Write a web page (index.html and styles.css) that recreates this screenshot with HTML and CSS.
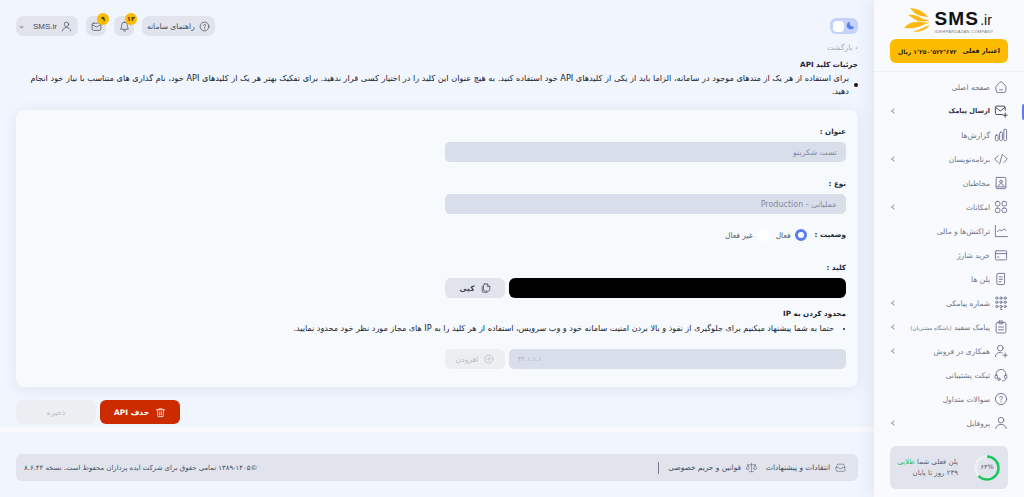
FILE: index.html
```html
<!DOCTYPE html>
<html lang="fa" dir="rtl">
<head>
<meta charset="utf-8">
<title>SMS.ir</title>
<link rel="stylesheet" href="styles.css">
</head>
<body>
<div class="app">
  <aside class="sidebar">
    <div class="logo" dir="ltr">
      <svg class="logo-mark" viewBox="0 0 27 24" width="27" height="24"><path d="M6 0c5 .5 13 2 18 9-5-.5-9-1-12-3C9 4 8 2 6 0z" fill="#fdb913"/><path d="M4 7c5-1 10 1 13 3 3 1.500 5 2 9 2-5 2-10 2-14 0-3-1.500-6-4-8-5z" fill="#fdb913"/><path d="M0 20c4-5 10-7 16-6 4 .5 7 .5 10 .5-5 1.500-8 3-12 4.500-5 1.500-10 1.500-14 1z" fill="#fdb913"/><path d="M9 23.500c6-1 11-5 17-6.500-3 4-10 8-17 6.500z" fill="#fdb913"/></svg>
      <div class="logo-text">
        <div class="logo-name">SMS<span class="logo-ir">.ir</span></div>
        <div class="logo-sub">IDEHPARDAZAN COMPANY</div>
      </div>
    </div>
    <div class="balance"><span class="bal-label">اعتبار فعلی</span><span class="bal-num">۱٬۲۵۰٬۵۲۲٬۶۷۲ ریال</span></div>
    <nav class="menu">
      <a class="item"><svg class="ico" viewBox="0 0 20 20"><path d="M3 9l5-5.500a3 3 0 0 1 4 0L17 9v6a3 3 0 0 1-3 3H6a3 3 0 0 1-3-3z"/><path d="M8 14h4"/></svg><span>صفحه اصلی</span></a>
      <a class="item active"><svg class="ico dark" viewBox="0 0 20 20"><path d="M16 9V5a2 2 0 0 0-2-2H4a2 2 0 0 0-2 2v8a2 2 0 0 0 2 2h8"/><path d="M2.500 5L9 10l6.500-5M16 13v6M13 16h6"/></svg><span>ارسال پیامک</span><i class="chev"></i></a>
      <a class="item"><svg class="ico" viewBox="0 0 20 20"><rect x="2" y="10" width="4" height="8" rx="1.500"/><rect x="8" y="6" width="4" height="12" rx="1.500"/><rect x="14" y="2" width="4" height="16" rx="1.500"/></svg><span>گزارش‌ها</span></a>
      <a class="item"><svg class="ico" viewBox="0 0 20 20"><path d="M6 5l-5 5 5 5M14 5l5 5-5 5M12 3L8 17"/></svg><span>برنامه‌نویسان</span><i class="chev"></i></a>
      <a class="item"><svg class="ico" viewBox="0 0 20 20"><rect x="3" y="2" width="14" height="16" rx="1.500"/><circle cx="10" cy="8" r="2"/><path d="M6.500 14c.5-2 2-3 3.500-3s3 1 3.500 3M3 15.500h14"/></svg><span>مخاطبان</span></a>
      <a class="item"><svg class="ico" viewBox="0 0 20 20"><rect x="2" y="2" width="6.500" height="6.500" rx="2.500"/><rect x="11.500" y="2" width="6.500" height="6.500" rx="2.500"/><rect x="2" y="11.500" width="6.500" height="6.500" rx="2.500"/><rect x="11.500" y="11.500" width="6.500" height="6.500" rx="2.500"/></svg><span>امکانات</span><i class="chev"></i></a>
      <a class="item"><svg class="ico" viewBox="0 0 20 20"><path d="M2 2v16h17M5 11l3-3 3 2 3-3 3 2"/></svg><span>تراکنش‌ها و مالی</span></a>
      <a class="item"><svg class="ico" viewBox="0 0 20 20"><rect x="2" y="4" width="16" height="13" rx="1.500"/><path d="M2 8h16M5 13h2"/></svg><span>خرید شارژ</span></a>
      <a class="item"><svg class="ico" viewBox="0 0 20 20"><path d="M4 4a2 2 0 0 1 2-2h9v14a2 2 0 0 1-2 2H6a2 2 0 0 1-2-2z"/><path d="M7.500 7h4.500M7.500 10.500h4.500M7.500 14h2.500"/></svg><span>پلن ها</span></a>
      <a class="item"><svg class="ico" viewBox="0 0 20 20"><circle cx="4" cy="3" r="1.600"/><circle cx="10" cy="3" r="1.600"/><circle cx="16" cy="3" r="1.600"/><circle cx="4" cy="9" r="1.600"/><circle cx="10" cy="9" r="1.600"/><circle cx="16" cy="9" r="1.600"/><circle cx="4" cy="15" r="1.600"/><circle cx="10" cy="15" r="1.600"/><circle cx="16" cy="15" r="1.600"/><circle cx="10" cy="19" r=".8"/></svg><span>شماره پیامکی</span><i class="chev"></i></a>
      <a class="item"><svg class="ico" viewBox="0 0 20 20"><rect x="3" y="3.500" width="14" height="15" rx="2"/><rect x="7" y="1.500" width="6" height="4" rx="1"/><path d="M6.500 10h7M6.500 14h7"/></svg><span>پیامک سفید <small>(باشگاه مشتریان)</small></span><i class="chev"></i></a>
      <a class="item"><svg class="ico" viewBox="0 0 20 20"><circle cx="9" cy="6" r="4"/><path d="M2 18c.5-4 3.500-6 7-6 1 0 2 .2 2.800.5M16 13v6M13 16h6"/></svg><span>همکاری در فروش</span><i class="chev"></i></a>
      <a class="item"><svg class="ico" viewBox="0 0 20 20"><path d="M3 11V9a7 7 0 0 1 14 0v2"/><rect x="1.500" y="10" width="3.500" height="5" rx="1.700"/><rect x="15" y="10" width="3.500" height="5" rx="1.700"/><path d="M17 15c0 2-2 3.500-5 3.500"/><circle cx="7" cy="16" r="1.800"/></svg><span>تیکت پشتیبانی</span></a>
      <a class="item"><svg class="ico" viewBox="0 0 20 20"><circle cx="10" cy="10" r="8"/><path d="M8 8a2 2 0 1 1 3 1.800c-.8.4-1 .9-1 1.700M10 14v.4"/></svg><span>سوالات متداول</span></a>
      <a class="item"><svg class="ico" viewBox="0 0 20 20"><circle cx="10" cy="6" r="4"/><path d="M2.500 18c.5-4 3.500-6 7.500-6s7 2 7.500 6"/></svg><span>پروفایل</span><i class="chev"></i></a>
    </nav>
    <div class="plan">
      <div class="ring">
        <svg viewBox="0 0 26 26" width="26" height="26"><circle cx="13" cy="13" r="11.500" class="ring-bg"/><circle cx="13" cy="13" r="11.500" class="ring-fg" pathLength="100" stroke-dasharray="63 100" transform="rotate(-90 13 13)"/></svg>
        <span class="ring-num">۶۳%</span>
      </div>
      <div class="plan-text">
        <div>پلن فعلی شما <b>طلایی</b></div>
        <div>۲۳۹ روز تا پایان</div>
      </div>
    </div>
    <span class="rail"></span>
  </aside>

  <main class="main">
    <header class="topbar">
      <div class="toggle"><svg class="moon" viewBox="0 0 12 12" width="10" height="10"><path d="M6 1a4.500 4.500 0 1 0 5 5.500A4 4 0 0 1 6 1z"/></svg><span class="knob"></span></div>
      <div class="tools">
        <a class="pill"><svg class="tool-ico" viewBox="0 0 20 20"><circle cx="10" cy="10" r="8"/><path d="M8 8a2 2 0 1 1 3 1.800c-.8.4-1 .9-1 1.700M10 14v.4"/></svg><span>راهنمای سامانه</span></a>
        <a class="pill square"><svg class="tool-ico" viewBox="0 0 20 20"><path d="M10 2a5 5 0 0 0-5 5c0 5-2 7-2 8h14c0-1-2-3-2-8a5 5 0 0 0-5-5zM8 18h4"/></svg><em class="badge">۱۳</em></a>
        <a class="pill square"><svg class="tool-ico" viewBox="0 0 20 20"><rect x="2" y="4" width="16" height="13" rx="2.500"/><path d="M2.500 7L10 11l7.500-4"/></svg><em class="badge">۹</em></a>
        <a class="pill user"><svg class="tool-ico" viewBox="0 0 20 20"><circle cx="10" cy="6" r="4"/><path d="M2.500 18c.5-4 3.500-6 7.500-6s7 2 7.500 6"/></svg><span>SMS.ir</span><i class="caret"></i></a>
      </div>
    </header>

    <a class="back">‹ بازگشت</a>
    <h1 class="title">جزئیات کلید API</h1>
    <ul class="notes">
      <li class="note">برای استفاده از هر یک از متدهای موجود در سامانه، الزاما باید از یکی از کلیدهای API خود استفاده کنید. به هیچ عنوان این کلید را در اختیار کسی قرار ندهید. برای تفکیک بهتر هر یک از کلیدهای API خود، نام گذاری های متناسب با نیاز خود انجام دهید.</li>
    </ul>

    <section class="card">
      <div class="form">
        <div class="field">
          <label class="label">عنوان :</label>
          <div class="input">تست شکرینو</div>
        </div>
        <div class="field">
          <label class="label">نوع :</label>
          <div class="input">عملیاتی - Production</div>
        </div>
        <div class="status">
          <span class="label">وضعیت :</span>
          <span class="radio on"></span><span class="radio-label">فعال</span>
          <span class="radio"></span><span class="radio-label">غیر فعال</span>
        </div>
        <div class="field key">
          <label class="label">کلید :</label>
          <div class="row">
            <div class="secret"></div>
            <button class="btn"><svg class="btn-ico" viewBox="0 0 16 16"><path d="M6 1.500h4l4 4V11a2 2 0 0 1-2 2H6a2 2 0 0 1-2-2V3.500a2 2 0 0 1 2-2z"/><path d="M10 1.500v4h4M2 5v8a2 2 0 0 0 2 2h6"/></svg><span>کپی</span></button>
          </div>
        </div>
      </div>
      <h2 class="ip-title">محدود کردن به IP</h2>
      <ul class="ip-notes">
        <li>حتما به شما پیشنهاد میکنیم برای جلوگیری از نفوذ و بالا بردن امنیت سامانه خود و وب سرویس، استفاده از هر کلید را به IP های مجاز مورد نظر خود محدود نمایید.</li>
      </ul>
      <div class="form">
        <div class="row">
          <div class="input ip">۴۲.۱.۱.۱</div>
          <button class="btn muted"><svg class="btn-ico" viewBox="0 0 16 16"><circle cx="8" cy="8" r="6.500"/><path d="M8 5v6M5 8h6"/></svg><span>افزودن</span></button>
        </div>
      </div>
    </section>

    <div class="actions">
      <button class="act delete"><svg class="act-ico" viewBox="0 0 16 16"><path d="M2 4h12M6 4V2.500h4V4M3.500 4l.8 10h7.400l.8-10M6.800 7v4.500M9.200 7v4.500"/></svg><span>حذف API</span></button>
      <button class="act save">ذخیره</button>
    </div>
    <div class="strip"></div>

    <footer class="footer">
      <div class="links">
        <a class="link"><svg class="foot-ico" viewBox="0 0 20 20"><path d="M2 10l2.500-6h11L18 10v5a2 2 0 0 1-2 2H4a2 2 0 0 1-2-2z"/><path d="M2 10h5l1 2h4l1-2h5"/></svg><span>انتقادات و پیشنهادات</span></a>
        <a class="link"><svg class="foot-ico" viewBox="0 0 20 20"><path d="M10 2v15M6 17.500h8M3 5h14M1 12l2.500-7L6 12a2.600 2.600 0 0 1-5 0zM14 12l2.500-7 2.500 7a2.600 2.600 0 0 1-5 0z"/></svg><span>قوانین و حریم خصوصی</span></a>
        <i class="sep"></i>
      </div>
      <div class="copy">©۱۳۸۹-۱۴۰۵ تمامی حقوق برای شرکت ایده پردازان محفوظ است. نسخه ۸.۶.۴۴</div>
    </footer>
  </main>
</div>
</body>
</html>
```
FILE: styles.css
```css
* { box-sizing: border-box; }
html, body { margin: 0; height: 497px; overflow: hidden; }
body { font-family: "DejaVu Sans", "Noto Sans", sans-serif; font-size: 8px; color: #1f2433; background: #f1f5fe; }
a { color: inherit; text-decoration: none; }
ul, h1, h2 { margin: 0; padding: 0; }
button { font: inherit; border: 0; cursor: pointer; }

.app { display: flex; width: 1024px; height: 497px; }

/* Sidebar */
.sidebar { position: relative; flex: 0 0 150px; width: 150px; min-width: 0; height: 497px; background: #f8fafd; box-shadow: -4px 0 14px rgba(120, 130, 180, .13); padding: 8px 16px 0; display: flex; flex-direction: column; }
.logo { display: flex; justify-content: center; align-items: flex-start; gap: 3px; height: 31px; }
.logo-name { font-family: "Liberation Sans", sans-serif; font-weight: 700; font-size: 19px; line-height: 18px; letter-spacing: 1.200px; color: #111; margin-top: 2px; white-space: nowrap; }
.logo-ir { font-size: 14px; font-weight: 400; letter-spacing: 0; margin-left: 1px; }
.logo-sub { font-family: "Liberation Sans", sans-serif; font-size: 4px; line-height: 5px; color: #777; letter-spacing: .35px; white-space: nowrap; }
.balance { display: flex; justify-content: space-between; align-items: center; height: 24px; background: #fdbb00; border-radius: 6px; padding: 0 8px; font-weight: 700; color: #262219; white-space: nowrap; }
.bal-label { font-size: 6.500px; }
.bal-num { font-size: 6px; }
.menu { margin: 8px -16px 0; padding-top: 3px; border-top: 1px solid #edf0f5; display: flex; flex-direction: column; }
.item { position: relative; display: flex; align-items: center; gap: 4px; height: 24px; padding-right: 16px; color: #6f7585; font-size: 7.500px; white-space: nowrap; }
.item small { font-size: 5.500px; }
.item.active { color: #2d3240; font-weight: 700; font-size: 6.600px; }
.ico { width: 14px; height: 14px; fill: none; stroke: #6a7190; stroke-width: 1.300; stroke-linecap: round; stroke-linejoin: round; flex: none; }
.ico.dark { stroke: #343a4e; }
.chev { position: absolute; left: 18px; top: 10px; width: 4px; height: 4px; border-left: 1px solid #9aa0ad; border-bottom: 1px solid #9aa0ad; transform: rotate(45deg); }
.plan { margin-top: 11px; height: 43px; background: #e1e4ec; border-radius: 6px; display: flex; align-items: center; gap: 16px; padding: 0 8px; font-size: 7px; line-height: 11px; color: #5c6273; white-space: nowrap; }
.plan b { color: #27c25c; font-weight: 400; }
.ring { position: relative; flex: none; width: 26px; height: 26px; }
.ring svg { display: block; fill: none; stroke-width: 2.500; }
.ring-bg { stroke: #eef0f4; }
.ring-fg { stroke: #1fc55c; }
.ring-num { position: absolute; inset: 0; display: flex; align-items: center; justify-content: center; font-size: 6.500px; }
.rail { position: absolute; left: 148px; top: 104px; width: 2px; height: 16px; background: #5b7cf0; border-radius: 2px 0 0 2px; }

/* Main */
.main { flex: 1; min-width: 0; padding: 16px 16px 0; display: flex; flex-direction: column; }
.topbar { display: flex; justify-content: space-between; align-items: flex-start; height: 24px; }
.toggle { width: 28px; height: 16px; margin-top: 2px; background: #c5d3fc; border-radius: 6px; display: flex; align-items: center; justify-content: space-between; padding: 0 3px; }
.knob { width: 11px; height: 11px; background: #fff; border-radius: 4px; }
.moon { fill: #5b7cf0; }
.tools { display: flex; gap: 8px; }
.pill { position: relative; display: flex; align-items: center; gap: 4px; height: 20px; padding: 0 5px; background: #e1e4ec; border-radius: 7px; font-size: 7.500px; color: #454b5e; white-space: nowrap; }
.pill.square { width: 20px; justify-content: center; padding: 0; }
.pill.user { width: 62px; padding: 0 6px 0 4px; }
.pill.user span { font-family: "Liberation Sans", sans-serif; font-size: 8px; }
.tool-ico { width: 11px; height: 11px; fill: none; stroke: #454b5e; stroke-width: 1.300; stroke-linecap: round; stroke-linejoin: round; flex: none; }
.caret { width: 3px; height: 3px; margin-right: auto; border-left: 1px solid #8a90a0; border-bottom: 1px solid #8a90a0; transform: rotate(-45deg); }
.badge { position: absolute; top: -3px; left: 11px; width: 12px; height: 12px; border-radius: 50%; background: #fdbb00; color: #3c3210; font-style: normal; font-size: 6.500px; font-weight: 700; display: flex; align-items: center; justify-content: center; }

.back { margin-top: 3px; color: #a9adb6; font-size: 7.500px; line-height: 10px; }
.title { margin-top: 7px; font-size: 7.200px; line-height: 10px; font-weight: 700; color: #1f2433; }
.notes { margin-top: 2px; padding: 0 0 0 12px; list-style: none; font-size: 8.200px; line-height: 13px; color: #20242f; }
.note { display: flex; align-items: center; gap: 5px; }
.note::before { content: ""; flex: none; width: 4px; height: 4px; border-radius: 50%; background: #14161c; }

.card { margin-top: 12px; height: 277px; background: #f7fafc; border-radius: 8px; box-shadow: 0 2px 14px rgba(120, 130, 180, .14); padding: 17px 12px 0; }
.form { width: 401px; }
.field { display: flex; flex-direction: column; gap: 5px; height: 52px; }
.label { font-size: 7.200px; line-height: 10px; font-weight: 700; color: #262b38; }
.input { height: 20px; background: #d9deeb; border-radius: 5px; padding: 0 9px; display: flex; align-items: center; font-size: 8px; color: #858b9d; }
.status { display: flex; align-items: center; height: 14px; margin-top: -3px; }
.status .label { margin-left: 8px; }
.radio { flex: none; width: 12px; height: 12px; border-radius: 50%; background: #fff; margin-left: 4px; }
.radio.on { background: #fff; border: 3.500px solid #5b7cf0; }
.radio-label { font-size: 7.500px; color: #555b6b; margin-left: 7px; }
.field.key { margin-top: 21px; height: auto; }
.row { display: flex; gap: 4px; height: 20px; }
.secret { flex: 1; background: #000; border-radius: 6px; }
.row .input.ip { flex: 1; color: #aab0c2; font-size: 6.500px; justify-content: flex-end; }
.btn { flex: 0 0 60px; height: 20px; background: #e1e4ec; border-radius: 6px; display: flex; align-items: center; justify-content: center; gap: 6px; font-size: 7.500px; font-weight: 700; color: #3a3f4e; }
.btn.muted { background: #eceef2; color: #b4b8c2; font-weight: 400; }
.btn-ico { width: 10px; height: 10px; fill: none; stroke: currentColor; stroke-width: 1.100; stroke-linejoin: round; stroke-linecap: round; }
.ip-title { margin-top: 11px; font-size: 7.200px; line-height: 10px; font-weight: 700; color: #1f2433; }
.ip-notes { margin: 3px 0 0; padding-right: 12px; list-style: disc; font-size: 8.070px; line-height: 13px; color: #20242f; height: 27px; }

.actions { display: flex; justify-content: flex-end; gap: 4px; margin-top: 13px; }
.act { flex: 0 0 80px; height: 24px; border-radius: 6px; display: flex; align-items: center; justify-content: center; gap: 6px; font-size: 7.500px; font-weight: 700; }
.delete { background: #cc2b00; color: #fff; }
.save { background: #eceef2; color: #b9bdc7; font-weight: 400; }
.act-ico { width: 11px; height: 11px; fill: none; stroke: #fff; stroke-width: 1.100; stroke-linejoin: round; stroke-linecap: round; }
.strip { height: 5px; margin: 3px -16px 0; background: #f8fafe; }

.footer { margin-top: 22px; height: 27px; background: #e1e4ec; border-radius: 6px; display: flex; align-items: center; justify-content: space-between; padding: 0 12px 0 8px; font-size: 7.400px; color: #464c5e; }
.links { display: flex; align-items: center; gap: 9px; }
.link { display: flex; align-items: center; gap: 5px; white-space: nowrap; }
.foot-ico { width: 11px; height: 11px; fill: none; stroke: #565c70; stroke-width: 1; stroke-linejoin: round; stroke-linecap: round; flex: none; }
.sep { width: 1px; height: 12px; background: #777d8d; }
.copy { white-space: nowrap; font-size: 6.900px; }
```
